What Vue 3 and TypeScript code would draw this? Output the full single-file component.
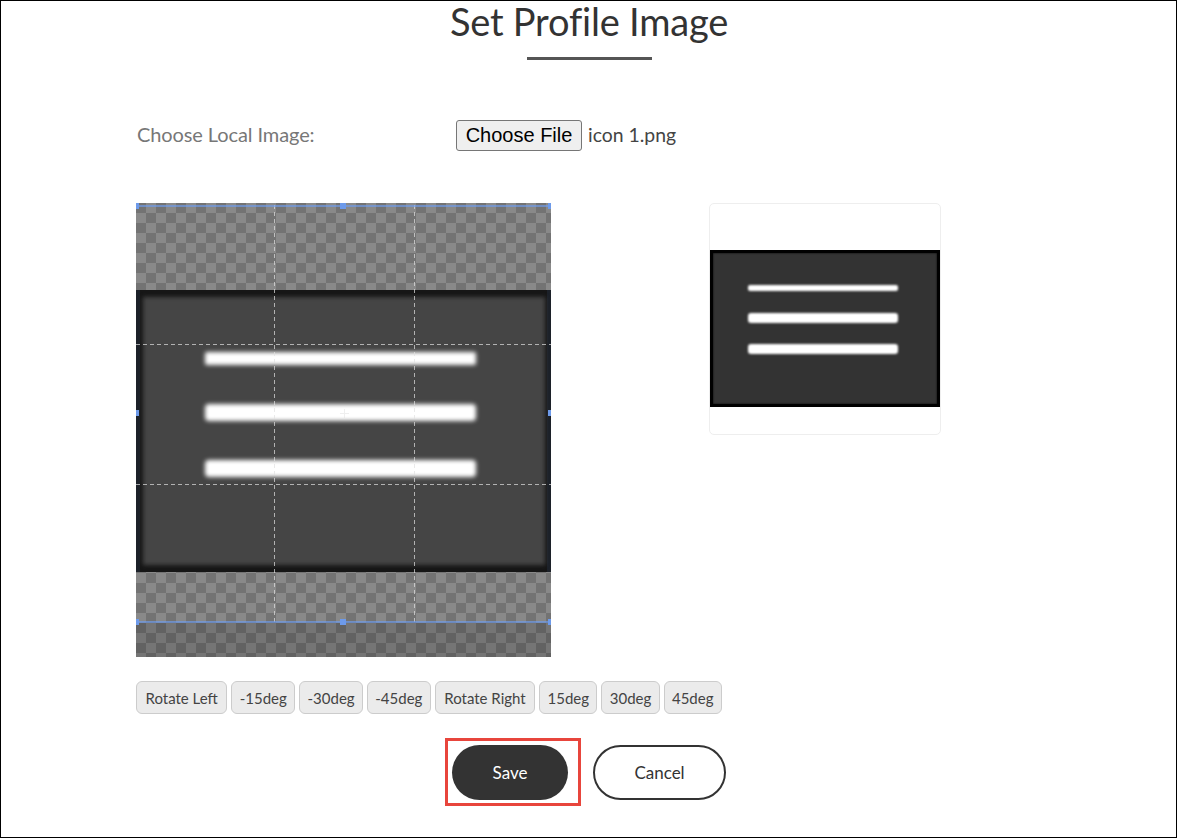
<script setup lang="ts">
const rotations: string[] = ['Rotate Left', '-15deg', '-30deg', '-45deg', 'Rotate Right', '15deg', '30deg', '45deg']
const handles: string[] = ['tl', 'tc', 'tr', 'ml', 'mr', 'bl', 'bc', 'br']
</script>

<template>
  <div class="page">
    <h1 class="title">Set Profile Image</h1>
    <div class="rule"></div>

    <div class="file-row">
      <label class="file-label">Choose Local Image:</label>
      <button type="button" class="file-btn">Choose File</button>
      <span class="file-name">icon 1.png</span>
    </div>

    <div class="editor">
      <div class="cropper">
        <div class="source">
          <div class="source-inner">
            <i class="bar bar-1"></i>
            <i class="bar bar-2"></i>
            <i class="bar bar-3"></i>
          </div>
        </div>
        <div class="shade"></div>
        <div class="crop-box">
          <i class="guide gh1"></i>
          <i class="guide gh2"></i>
          <i class="guide gv1"></i>
          <i class="guide gv2"></i>
          <i class="line line-top"></i>
          <i class="line line-bottom"></i>
          <i class="plus"></i>
          <i v-for="h in handles" :key="h" class="handle" :class="h"></i>
        </div>
      </div>

      <div class="preview">
        <div class="preview-img">
          <i class="pbar pbar-1"></i>
          <i class="pbar pbar-2"></i>
          <i class="pbar pbar-3"></i>
        </div>
      </div>
    </div>

    <div class="rotate-row">
      <button
        v-for="r in rotations"
        :key="r"
        type="button"
        class="rotate-btn"
        :class="{ deg: r.endsWith('deg') }"
      >{{ r }}</button>
    </div>

    <div class="actions">
      <div class="highlight">
        <button type="button" class="btn save">Save</button>
      </div>
      <button type="button" class="btn cancel">Cancel</button>
    </div>
  </div>
</template>

<style>
html, body { margin: 0; background: #fff; }
</style>

<style scoped>
.page {
  box-sizing: border-box;
  width: 1177px;
  height: 838px;
  border: 1px solid #000;
  font-family: Lato, "Liberation Sans", sans-serif;
  color: #333;
  overflow: hidden;
  background: #fff;
}
.title {
  margin: 0;
  padding-left: 1px;
  height: 44px;
  line-height: 40px;
  font-size: 38px;
  font-weight: 400;
  letter-spacing: -0.2px;
  text-align: center;
  color: #333;
}
.rule {
  width: 125px;
  height: 3px;
  margin: 12px auto 0 526px;
  background: #555;
}
.file-row {
  display: flex;
  align-items: center;
  margin-top: 59px;
  padding-left: 136px;
  height: 33px;
}
.file-label {
  width: 319px;
  margin-top: -4px;
  font-size: 20px;
  letter-spacing: -0.1px;
  color: #777;
}
.file-btn {
  box-sizing: border-box;
  width: 126px;
  height: 31px;
  padding: 0;
  border: 1px solid #767676;
  border-radius: 3px;
  background: #efefef;
  color: #000;
  font-family: "Liberation Sans", Arial, sans-serif;
  font-size: 20px;
}
.file-name {
  margin-left: 6px;
  margin-top: -2px;
  font-size: 19.4px;
  color: #444;
}
.editor {
  display: flex;
  align-items: flex-start;
  margin-top: 51px;
  padding-left: 135px;
}
.cropper {
  position: relative;
  flex: none;
  width: 415px;
  height: 454px;
  background-color: #898989;
  background-image: conic-gradient(#898989 25%, #737373 0 50%, #898989 0 75%, #737373 0);
  background-size: 20px 20px;
  overflow: hidden;
}
.source {
  position: absolute;
  left: 0;
  right: 0;
  top: 87px;
  height: 282px;
  background: linear-gradient(90deg, #1c2129 0 4px, #161616 4px calc(100% - 4px), #1c2129 calc(100% - 4px));
  overflow: hidden;
}
.source-inner {
  position: absolute;
  inset: 0;
}
.source-inner::before {
  content: "";
  position: absolute;
  inset: 7px 6px 7px 7px;
  background: #454545;
  filter: blur(2px);
}
.bar {
  position: absolute;
  left: 69px;
  width: 271px;
  background: #fff;
  border-radius: 2px;
  filter: blur(2px);
}
.bar-1 { top: 62px; height: 13px; }
.bar-2 { top: 114px; height: 17px; border-radius: 4px; }
.bar-3 { top: 170px; height: 17px; border-radius: 4px; }
.shade {
  position: absolute;
  left: 0;
  right: 0;
  top: 419px;
  bottom: 0;
  background: rgba(0, 0, 0, 0.14);
}
.crop-box {
  position: absolute;
  left: 0;
  right: 0;
  top: 2px;
  height: 417px;
}
.line {
  display: block;
  position: absolute;
  left: 0;
  right: 0;
  height: 2px;
  background: #6f9cee;
  opacity: 0.65;
}
.line-top { top: 0; }
.line-bottom { bottom: -1px; }
.guide {
  position: absolute;
}
.gh1, .gh2 {
  left: 0;
  right: 0;
  height: 1px;
  background: repeating-linear-gradient(90deg, rgba(225, 225, 225, 0.7) 0 4px, transparent 4px 7px);
}
.gh1 { top: 139px; }
.gh2 { top: 279px; }
.gv1, .gv2 {
  top: 0;
  bottom: 0;
  width: 1px;
  background: repeating-linear-gradient(180deg, rgba(225, 225, 225, 0.7) 0 4px, transparent 4px 7px);
}
.gv1 { left: 138px; }
.gv2 { left: 278px; }
.plus {
  position: absolute;
  left: 204px;
  top: 204px;
  width: 9px;
  height: 9px;
  opacity: 0.45;
  background:
    linear-gradient(#ddd, #ddd) center / 9px 1px no-repeat,
    linear-gradient(#ddd, #ddd) center / 1px 9px no-repeat;
}
.handle {
  position: absolute;
  width: 6px;
  height: 6px;
  background: #6d9aea;
}
.tl { left: -3px; top: -2px; }
.tc { left: 204px; top: -2px; }
.tr { right: -3px; top: -2px; }
.ml { left: -3px; top: 205px; }
.mr { right: -3px; top: 205px; }
.bl { left: -3px; bottom: -3px; }
.bc { left: 204px; bottom: -3px; }
.br { right: -3px; bottom: -3px; }
.preview {
  box-sizing: border-box;
  position: relative;
  flex: none;
  width: 232px;
  height: 232px;
  margin-left: 158px;
  padding-top: 46px;
  border: 1px solid #eee;
  border-radius: 5px;
  background: #fff;
}
.preview-img {
  box-sizing: border-box;
  position: relative;
  width: 230px;
  height: 157px;
  background: #333;
  border: 3px solid #000;
  box-shadow: inset 0 0 2px #000;
}
.pbar {
  position: absolute;
  left: 35px;
  width: 150px;
  background: #fff;
  border-radius: 2px;
  filter: blur(0.8px);
}
.pbar-1 { top: 32px; height: 6px; }
.pbar-2 { top: 60px; height: 10px; border-radius: 3px; }
.pbar-3 { top: 91px; height: 10px; border-radius: 3px; }
.rotate-row {
  display: flex;
  gap: 4px;
  margin-top: 24px;
  padding-left: 135px;
}
.rotate-btn {
  box-sizing: border-box;
  height: 33px;
  padding: 0 8.5px;
  border: 1px solid #ccc;
  border-radius: 6px;
  background: #ebebeb;
  color: #444;
  font-family: Lato, "Liberation Sans", sans-serif;
  font-size: 15px;
}
.rotate-btn.deg {
  padding: 0 7.35px;
}
.actions {
  display: flex;
  align-items: flex-start;
  gap: 12px;
  margin-top: 24px;
  padding-left: 444px;
}
.highlight {
  padding: 4px 10px 3px 4px;
  border: 3px solid #e8453c;
}
.btn {
  display: block;
  box-sizing: border-box;
  height: 55px;
  border-radius: 28px;
  font-family: Lato, "Liberation Sans", sans-serif;
  font-size: 17px;
}
.save {
  width: 116px;
  border: 0;
  background: #333;
  color: #fff;
}
.cancel {
  width: 133px;
  margin-top: 7px;
  border: 2px solid #333;
  background: #fff;
  color: #333;
}
</style>
